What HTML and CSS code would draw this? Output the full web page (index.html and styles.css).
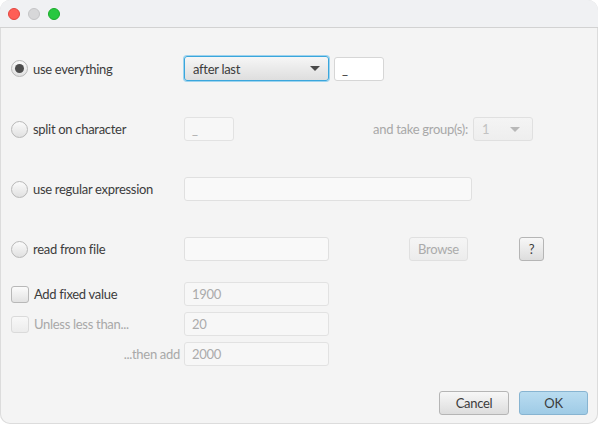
FILE: index.html
```html
<!DOCTYPE html>
<html>
<head>
<meta charset="utf-8">
<link rel="stylesheet" href="styles.css">
</head>
<body>
<div class="window">
  <div class="titlebar">
    <span class="light red"></span>
    <span class="light gray"></span>
    <span class="light green"></span>
  </div>
  <div class="content">
    <div class="row row-a">
      <div class="lead"><span class="radio checked"></span><span class="label">use everything</span></div>
      <div class="combo focused w145"><span>after last</span><span class="arrow"></span></div>
      <div class="field w50 gap5">_</div>
    </div>
    <div class="row row-b">
      <div class="lead"><span class="radio"></span><span class="label">split on character</span></div>
      <div class="field w50 disabled">_</div>
      <div class="take disabled-text">and take group(s):</div>
      <div class="combo w60 disabled"><span>1</span><span class="arrow"></span></div>
    </div>
    <div class="row row-c">
      <div class="lead"><span class="radio"></span><span class="label">use regular expression</span></div>
      <div class="field w288"></div>
    </div>
    <div class="row row-d">
      <div class="lead"><span class="radio"></span><span class="label">read from file</span></div>
      <div class="field w145"></div>
      <div class="button browse disabled">Browse</div>
      <div class="button help">?</div>
    </div>
    <div class="row row-e">
      <div class="lead"><span class="check"></span><span class="label">Add fixed value</span></div>
      <div class="field w145 disabled">1900</div>
    </div>
    <div class="row row-f">
      <div class="lead"><span class="check disabled"></span><span class="label disabled-text">Unless less than...</span></div>
      <div class="field w145 disabled">20</div>
    </div>
    <div class="row row-g">
      <div class="lead right"><span class="label disabled-text">...then add</span></div>
      <div class="field w145 disabled">2000</div>
    </div>
    <div class="buttons">
      <div class="button cancel">Cancel</div>
      <div class="button ok">OK</div>
    </div>
  </div>
</div>
</body>
</html>
```
FILE: styles.css
```css
html, body {
  margin: 0;
  padding: 0;
  background: #ffffff;
}
body {
  font-family: Lato, "Open Sans", "Liberation Sans", sans-serif;
  font-size: 13px;
  letter-spacing: -0.3px;
  color: #3c3c3c;
}
.window {
  width: 598px;
  height: 424px;
  background: #f4f4f4;
  border-radius: 10px;
  overflow: hidden;
  box-shadow: 0 0 0 1px #dcdcdc inset;
  display: flex;
  flex-direction: column;
}
.titlebar {
  height: 27px;
  background: #f0f1f3;
  border-bottom: 1px solid #d2d2d2;
  display: flex;
  align-items: center;
  gap: 8px;
  padding-left: 8px;
  box-sizing: content-box;
}
.light {
  width: 12px;
  height: 12px;
  border-radius: 50%;
  box-sizing: border-box;
}
.light.red { background: #fe5f57; border: 1px solid #e2463f; }
.light.gray { background: #d7d7d9; border: 1px solid #c4c4c6; }
.light.green { background: #28c840; border: 1px solid #1aab29; }
.content {
  flex: 1;
  display: flex;
  flex-direction: column;
  padding: 28px 10px 0 11px;
}
.row {
  display: flex;
  align-items: center;
  height: 24px;
}
.row-a { height: 25px; }
.row-b { margin-top: 36px; }
.row-c { margin-top: 36px; }
.row-d { margin-top: 36px; }
.row-e { margin-top: 21px; }
.row-f { margin-top: 6px; }
.row-g { margin-top: 6px; }
.lead {
  width: 173px;
  display: flex;
  align-items: center;
  height: 100%;
}
.lead.right {
  justify-content: flex-end;
  padding-right: 4px;
  box-sizing: border-box;
}
.label {
  margin-left: 5px;
  white-space: nowrap;
}
.lead.right .label { margin-left: 0; }
.disabled-text { color: #a8a8a8; }
.radio {
  width: 17px;
  height: 17px;
  border-radius: 50%;
  box-sizing: border-box;
  border: 1px solid #b8b8b8;
  background: linear-gradient(#fbfbfb, #e0e0e0);
  display: flex;
  align-items: center;
  justify-content: center;
}
.radio.checked::after {
  content: "";
  width: 9px;
  height: 9px;
  border-radius: 50%;
  background: #4d4d4d;
}
.check {
  width: 18px;
  height: 17px;
  border-radius: 3px;
  box-sizing: border-box;
  border: 1px solid #b8b8b8;
  background: linear-gradient(#fbfbfb, #e2e2e2);
}
.check.disabled {
  border-color: #dadada;
  background: linear-gradient(#f8f8f8, #ececec);
}
.field {
  height: 24px;
  box-sizing: border-box;
  border: 1px solid #d6d6d6;
  border-radius: 3px;
  background: #ffffff;
  padding: 0 7px;
  display: flex;
  align-items: center;
  color: #333;
}
.field.disabled {
  background: #f7f7f7;
  border-color: #e2e2e2;
  color: #ababab;
}
.row-c .field, .row-d .field { background: #f9f9f9; border-color: #e0e0e0; }
.w50 { width: 50px; }
.w60 { width: 60px; }
.w145 { width: 145px; }
.w288 { width: 288px; }
.gap5 { margin-left: 5px; }
.combo {
  height: 25px;
  box-sizing: border-box;
  border: 1px solid #b5b5b5;
  border-radius: 3px;
  background: linear-gradient(#f6f6f6, #dedede);
  display: flex;
  align-items: center;
  justify-content: space-between;
  padding: 0 8px 0 8px;
}
.combo.focused {
  border: 1px solid #3aa6dc;
  box-shadow: 0 0 0 1px #9dd3ee;
}
.combo .arrow {
  width: 0;
  height: 0;
  border-left: 5px solid transparent;
  border-right: 5px solid transparent;
  border-top: 5px solid #4a4a4a;
}
.combo.disabled {
  height: 24px;
  border-color: #e0e0e0;
  background: linear-gradient(#f4f4f4, #eeeeee);
  color: #c2c2c2;
  padding-right: 12px;
}
.combo.disabled .arrow { border-top-color: #b8b8b8; }
.take {
  width: 234px;
  text-align: right;
  margin-right: 5px;
  white-space: nowrap;
}
.button {
  height: 24px;
  box-sizing: border-box;
  border: 1px solid #b5b5b5;
  border-radius: 3px;
  background: linear-gradient(#f7f7f7, #dddddd);
  display: flex;
  align-items: center;
  justify-content: center;
}
.button.disabled {
  border-color: #e0e0e0;
  background: linear-gradient(#f5f5f5, #ececec);
  color: #ababab;
}
.browse { width: 59px; margin-left: 80px; }
.help { width: 25px; margin-left: 51px; }
.buttons {
  display: flex;
  justify-content: flex-end;
  gap: 10px;
  margin-top: 25px;
}
.cancel { width: 70px; }
.ok {
  width: 69px;
  border-color: #87b4d1;
  background: linear-gradient(#b9dcf0, #9fcbe6);
}
```
